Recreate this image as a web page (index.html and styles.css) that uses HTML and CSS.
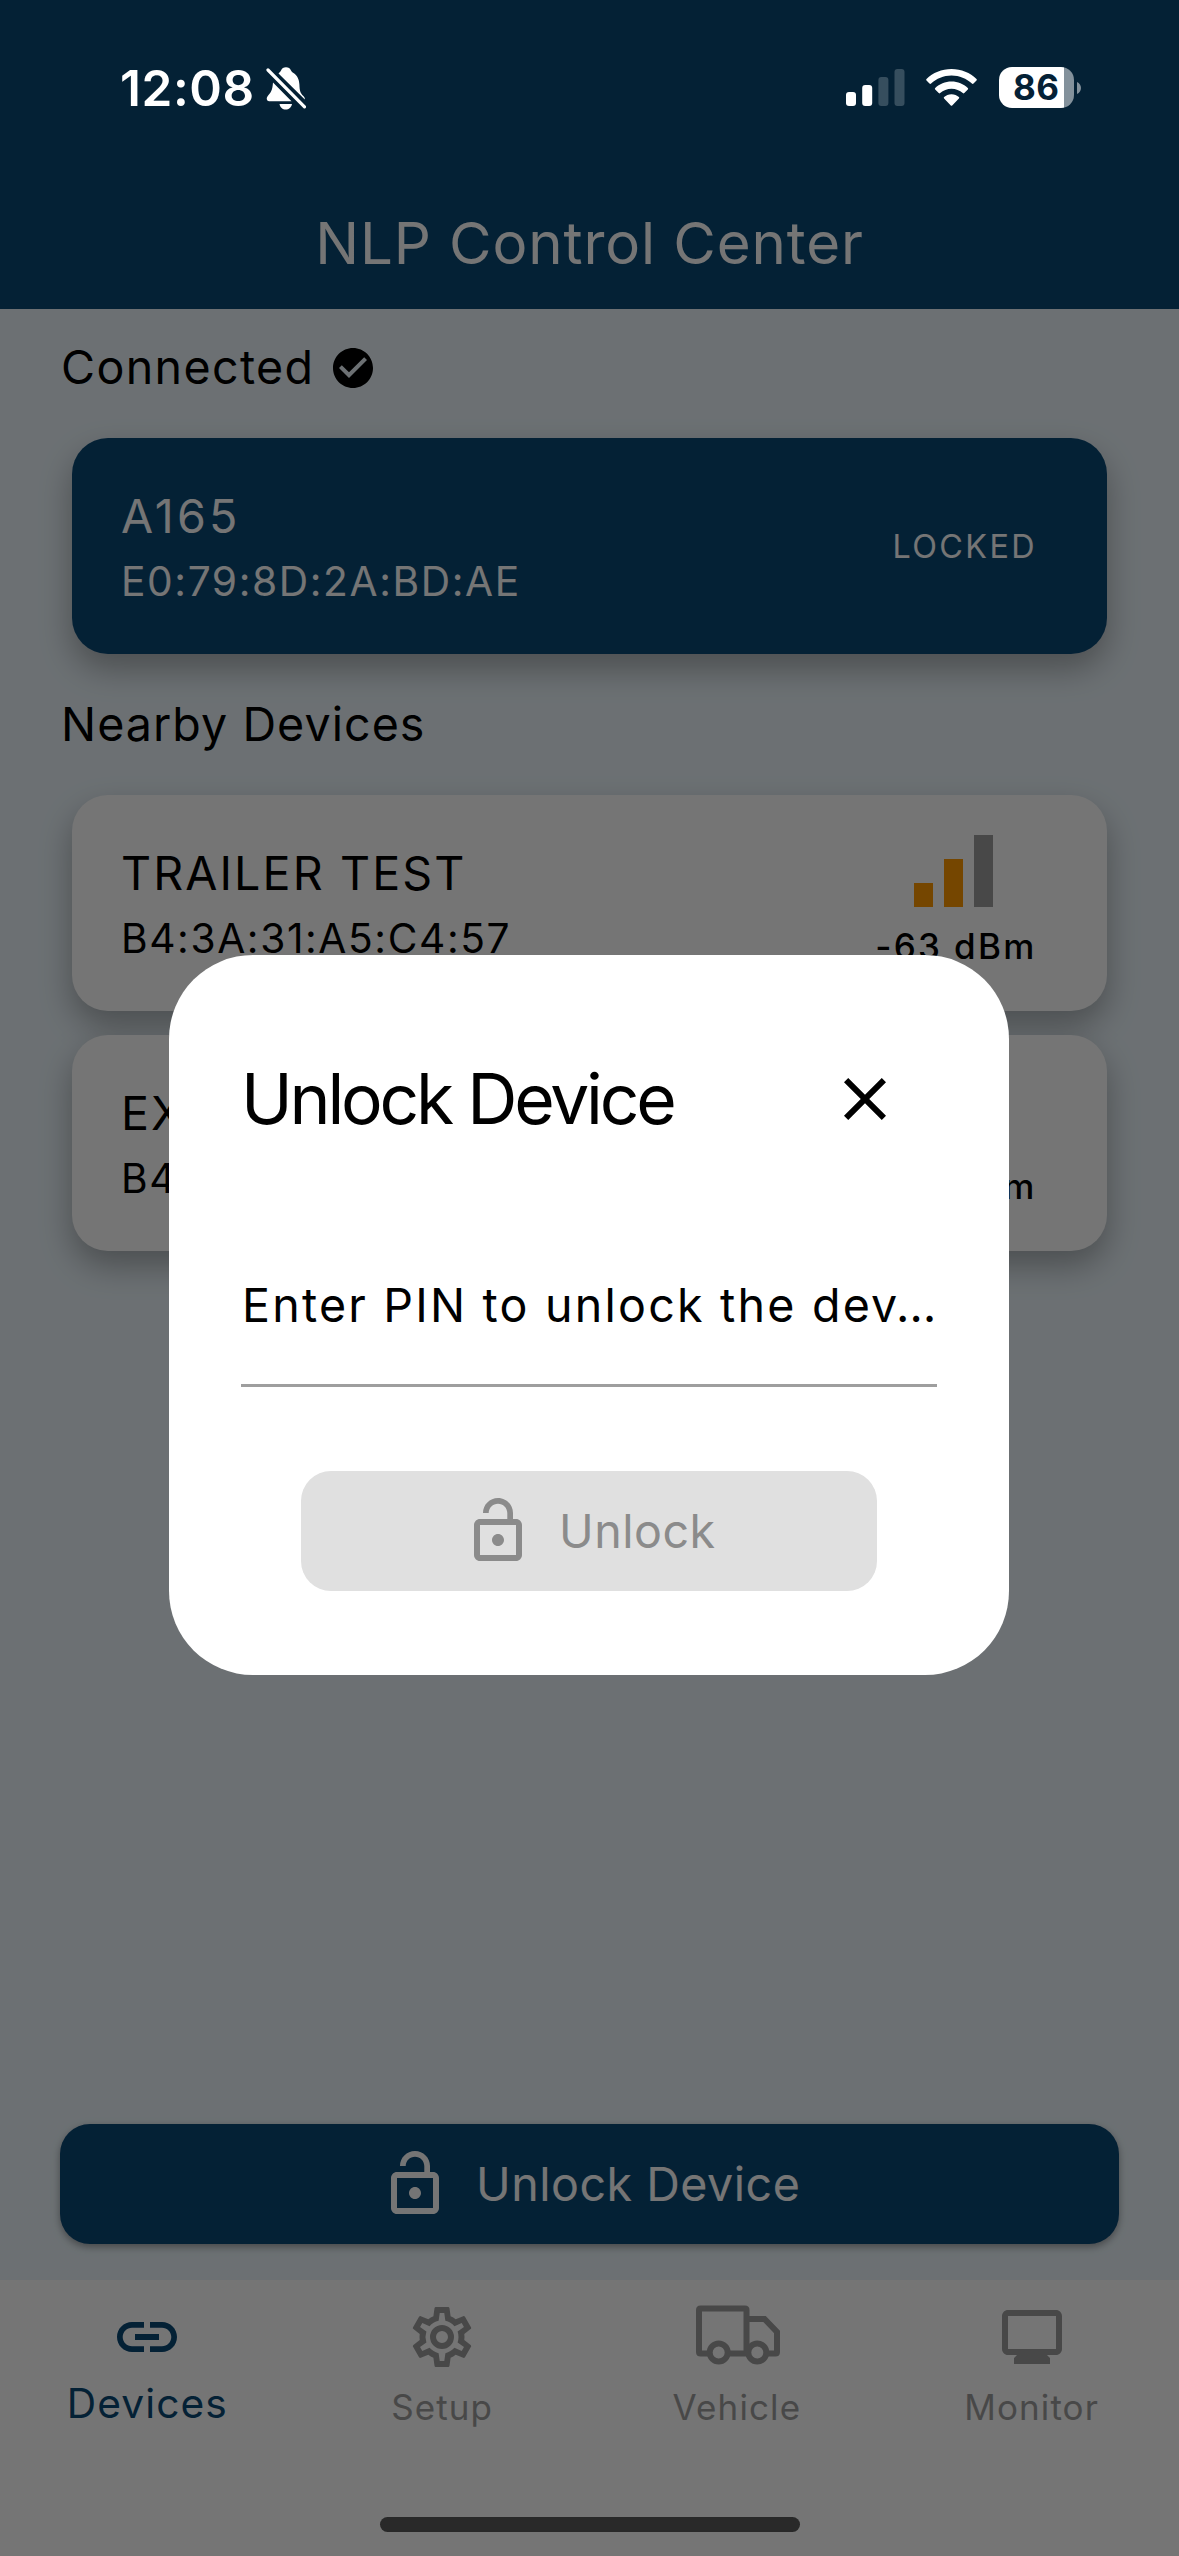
FILE: index.html
```html
<!DOCTYPE html>
<html lang="en">
<head>
<meta charset="utf-8">
<title>NLP Control Center</title>
<link rel="stylesheet" href="styles.css">
</head>
<body>
<div class="screen">
  <header class="app-bar"><h1 class="app-title">NLP Control Center</h1></header>

  <main class="content">
    <h2 class="section section-connected"><span class="connected-text">Connected</span>
      <svg class="check" viewBox="0 0 24 24"><path d="M12 2C6.48 2 2 6.48 2 12s4.48 10 10 10 10-4.48 10-10S17.52 2 12 2zm-2 15l-5-5 1.41-1.41L10 14.17l7.59-7.59L19 8l-9 9z"/></svg>
    </h2>
    <article class="card card-active">
      <div class="card-info"><div class="name name-code">A165</div><div class="mac">E0:79:8D:2A:BD:AE</div></div>
      <div class="locked">LOCKED</div>
    </article>
    <h2 class="section section-nearby">Nearby Devices</h2>
    <article class="card">
      <div class="card-info"><div class="name">TRAILER TEST</div><div class="mac">B4:3A:31:A5:C4:57</div></div>
      <div class="signal">
        <div class="bars"><i class="bar low on"></i><i class="bar mid on"></i><i class="bar high"></i></div>
        <div class="dbm">-63 dBm</div>
      </div>
    </article>
    <article class="card">
      <div class="card-info"><div class="name">EX</div><div class="mac">B4</div></div>
      <div class="signal">
        <div class="bars"></div>
        <div class="dbm">dBm</div>
      </div>
    </article>
  </main>

  <button class="unlock-main">
    <svg class="icon72" viewBox="0 0 24 24"><path d="M12 17c1.1 0 2-.9 2-2s-.9-2-2-2-2 .9-2 2 .9 2 2 2zm6-9h-1V6c0-2.76-2.24-5-5-5S7 3.24 7 6h1.9c0-1.71 1.39-3.1 3.1-3.1 1.71 0 3.1 1.39 3.1 3.1v2H6c-1.1 0-2 .9-2 2v10c0 1.1.9 2 2 2h12c1.1 0 2-.9 2-2V10c0-1.1-.9-2-2-2zm0 12H6V10h12v10z"/></svg>
    <span class="unlock-text">Unlock Device</span>
  </button>

  <nav class="tabs">
    <div class="tab tab-on">
      <svg class="icon72" viewBox="0 0 24 24"><path d="M3.9 12c0-1.71 1.39-3.1 3.1-3.1h4V7H7c-2.76 0-5 2.24-5 5s2.24 5 5 5h4v-1.9H7c-1.71 0-3.1-1.39-3.1-3.1zM8 13h8v-2H8v2zm9-6h-4v1.9h4c1.71 0 3.1 1.39 3.1 3.1s-1.39 3.1-3.1 3.1h-4V17h4c2.76 0 5-2.24 5-5s-2.24-5-5-5z"/></svg>
      <span class="tab-text">Devices</span>
    </div>
    <div class="tab">
      <svg class="icon72" viewBox="0 0 24 24"><path d="M12 8a4 4 0 0 1 4 4 4 4 0 0 1-4 4 4 4 0 0 1-4-4 4 4 0 0 1 4-4m0 2a2 2 0 0 0-2 2 2 2 0 0 0 2 2 2 2 0 0 0 2-2 2 2 0 0 0-2-2m-2 12c-.25 0-.46-.18-.5-.42l-.37-2.650c-.63-.25-1.170-.59-1.690-.99l-2.490 1.010c-.22.08-.49 0-.61-.22l-2-3.460a.493.493 0 0 1 .12-.64l2.110-1.660L4.500 12l.07-1-2.110-1.630a.493.493 0 0 1-.12-.64l2-3.460c.12-.22.39-.31.61-.22l2.490 1c.52-.39 1.060-.73 1.690-.98l.37-2.650c.04-.24.25-.42.5-.42h4c.25 0 .46.18.5.42l.37 2.650c.63.25 1.170.59 1.690.98l2.490-1c.22-.09.49 0 .61.22l2 3.460c.13.22.07.49-.12.64L19.430 11l.07 1-.07 1 2.110 1.630c.19.15.25.42.12.64l-2 3.460c-.12.22-.39.31-.61.22l-2.490-1c-.52.39-1.060.73-1.690.98l-.37 2.650c-.04.24-.25.42-.5.42zm1.250-18-.37 2.610c-1.200.25-2.260.89-3.030 1.780L5.440 7.350l-.75 1.300L6.800 10.200a5.550 5.550 0 0 0 0 3.600l-2.120 1.560.75 1.300 2.430-1.040c.77.88 1.820 1.520 3.010 1.760l.37 2.620h1.520l.37-2.610c1.190-.25 2.240-.89 3.010-1.770l2.430 1.040.75-1.300-2.120-1.550c.4-1.170.4-2.440 0-3.610l2.110-1.550-.75-1.300-2.410 1.040a5.420 5.420 0 0 0-3.030-1.770L12.750 4z"/></svg>
      <span class="tab-text">Setup</span>
    </div>
    <div class="tab">
      <svg class="truck" viewBox="0 0 90 72"><g fill="none" stroke="currentColor" stroke-width="6"><path d="M17 52.500H8.500Q7 52.500 7 51V9Q7 7.500 8.500 7.500H53Q54.500 7.500 54.500 9V52.500M36 52.500H57M54.500 18H72.500L85 31V51Q85 52.500 83.500 52.500H75"/><circle cx="26.700" cy="51.500" r="9"/><circle cx="65.300" cy="51.500" r="9"/></g></svg>
      <span class="tab-text">Vehicle</span>
    </div>
    <div class="tab">
      <svg class="icon72" viewBox="0 0 24 24"><path fill-rule="evenodd" d="M4 3h16c1.1 0 2 .9 2 2v11c0 1.1-.9 2-2 2h-3l1 1v2H6v-2l1-1H4c-1.1 0-2-.9-2-2V5c0-1.1.9-2 2-2zm0 2v11h16V5z"/></svg>
      <span class="tab-text">Monitor</span>
    </div>
  </nav>
</div>

<div class="scrim">
  <section class="dialog">
    <div class="dialog-head">
      <h2 class="dialog-title">Unlock Device</h2>
      <svg class="icon72" viewBox="0 0 24 24"><path d="M19 6.41L17.59 5 12 10.59 6.41 5 5 6.41 10.59 12 5 17.59 6.41 19 12 13.41 17.59 19 19 17.59 13.41 12z"/></svg>
    </div>
    <div class="field"><span>Enter PIN to unlock the dev…</span></div>
    <button class="unlock-dialog">
      <svg class="icon72" viewBox="0 0 24 24"><path d="M12 17c1.1 0 2-.9 2-2s-.9-2-2-2-2 .9-2 2 .9 2 2 2zm6-9h-1V6c0-2.76-2.24-5-5-5S7 3.24 7 6h1.9c0-1.71 1.39-3.1 3.1-3.1 1.71 0 3.1 1.39 3.1 3.1v2H6c-1.1 0-2 .9-2 2v10c0 1.1.9 2 2 2h12c1.1 0 2-.9 2-2V10c0-1.1-.9-2-2-2zm0 12H6V10h12v10z"/></svg>
      <span class="unlock-text">Unlock</span>
    </button>
  </section>
</div>

<div class="status-bar">
  <span class="time">12:08</span>
  <svg class="bell" viewBox="0 0 40 43"><g fill="#fff"><path d="M12.500 6.500C14 5 14.500 4.500 15 3.500 16 1.200 17.500.300 20 .300s4 .9 5 3.200c.6 1.300 1.400 1.800 2.500 2.500 4 2.700 5.700 6.500 5.900 11.500.2 6 .9 8.500 4 11.500 1.200 1.200 1.600 2.300 1.400 3.600z"/><path d="M7 15.500 25.500 34.300H3.200C.8 34.300-.1 31.200 1.600 29.200 5 25.500 6.500 23 7 15.500z"/><path d="M13.500 37H26c-.6 3.300-3.200 5.600-6.300 5.600S14 40.300 13.500 37z"/></g><path d="M2 3 38.500 39.800" stroke="#fff" stroke-width="3.200" stroke-linecap="round"/></svg>
  <svg class="cell" viewBox="0 0 59 37"><g fill="#fff"><rect x="0" y="23" width="10" height="14" rx="3"/><rect x="16.200" y="16" width="10" height="21" rx="3"/><g opacity=".2"><rect x="32.400" y="8" width="10" height="29" rx="3"/><rect x="48.500" y="0" width="10" height="37" rx="3"/></g></g></svg>
  <svg class="wifi" viewBox="0 0 51 37"><g fill="#fff"><path d="M25.500 0C35.300 0 44.200 3.800 50.500 10c.5.500.5 1.100 0 1.600l-3 3c-.5.500-1.100.5-1.600 0C40.500 9.500 33.400 6.500 25.500 6.500S10.500 9.500 5.100 14.600c-.5.500-1.100.5-1.600 0l-3-3c-.5-.5-.5-1.100 0-1.600C6.800 3.800 15.700 0 25.500 0z"/><path d="M25.500 12.500c6.300 0 12.100 2.500 16.300 6.400.5.500.5 1.100 0 1.600l-3.500 3.600c-.5.400-1 .4-1.500 0-3-2.700-7-4.400-11.300-4.400s-8.300 1.700-11.300 4.400c-.5.400-1 .4-1.500 0l-3.500-3.600c-.5-.5-.5-1.100 0-1.600 4.200-3.900 10-6.400 16.300-6.400z"/><path d="M25.500 25.200c2.900 0 5.500 1.100 7.400 2.800.5.500.5 1 0 1.500L26.200 36.500c-.5.400-.9.400-1.400 0L18.100 29.500c-.5-.5-.5-1 0-1.500 1.900-1.700 4.500-2.800 7.400-2.800z"/></g></svg>
  <div class="battery"><span class="level">86</span></div>
  <svg class="battery-cap" viewBox="0 0 4 12"><path d="M0 0c2.500 1.200 4 3.500 4 6s-1.500 4.800-4 6z" fill="#83919b"/></svg>
</div>
<div class="home-indicator"></div>
</body>
</html>
```
FILE: styles.css
```css
* { box-sizing: border-box; margin: 0; padding: 0; }
body { width: 1179px; height: 2556px; overflow: hidden; position: relative; font-family: Inter, "Liberation Sans", sans-serif; color: #000; }
svg { display: block; fill: currentColor; flex: none; }
button { border: 0; font: inherit; }
h1, h2 { font-weight: 400; }
span, .name, .mac, .dbm, .locked { white-space: nowrap; }
.icon72 { width: 72px; height: 72px; }

.screen { width: 1179px; height: 2556px; display: flex; flex-direction: column; background: #ebf5fb; }
.app-bar { height: 309px; background: #0a4875; color: #fff; display: flex; justify-content: center; padding-top: 207px; }
.app-title { font-size: 58.2px; line-height: 72px; letter-spacing: .9px; height: 72px; white-space: nowrap; }

.content { flex: 1; padding: 0 72px; display: flex; flex-direction: column; }
.section { display: flex; align-items: center; height: 60px; margin-left: -11px; font-size: 46.6px; line-height: 60px; }
.section-connected { margin-top: 29px; margin-bottom: 40px; gap: 15px; }
.connected-text { letter-spacing: 1.35px; padding-bottom: 2px; }
.section-nearby { margin-top: 40px; margin-bottom: 41px; letter-spacing: 1.05px; }
.check { width: 48px; height: 48px; }
.card { height: 216px; flex: none; border-radius: 36px; background: #fff; margin-bottom: 24px; padding: 0 72px 0 49px; display: flex; justify-content: space-between; align-items: center; box-shadow: 0 15px 33px rgba(0,0,0,.3); }
.card-active { background: #0a4875; color: #fff; margin-bottom: 0; }
.card-info { padding-top: 7px; }
.name { font-size: 46.6px; line-height: 65px; letter-spacing: 2.1px; }
.name-code { letter-spacing: 3.2px; }
.mac { font-size: 40.7px; line-height: 66px; letter-spacing: 1.6px; }
.locked { font-size: 32.3px; letter-spacing: 2.4px; margin-right: -2px; }
.signal { display: flex; flex-direction: column; align-items: flex-end; }
.bars { display: flex; align-items: flex-end; gap: 11.25px; height: 72px; margin-right: 42px; }
.bar { width: 18.75px; background: #9e9e9e; }
.low { height: 24px; }
.mid { height: 48px; }
.high { height: 72px; }
.on { background: #ff9800; }
.dbm { font-size: 35px; font-weight: 500; line-height: 46px; margin-top: 16px; padding-bottom: 2px; letter-spacing: 2.3px; margin-right: -1.6px; }

.unlock-main { width: 1059px; height: 120px; margin: 0 60px 36px; border-radius: 30px; background: #0a4875; color: #fff; display: flex; align-items: center; padding-left: 319px; gap: 25px; font-size: 46.6px; box-shadow: 0 3px 6px rgba(0,0,0,.25), 0 3px 12px rgba(0,0,0,.12); }
.unlock-text { letter-spacing: .5px; }
.tabs { height: 276px; background: #fff; color: #9e9e9e; display: grid; grid-template-columns: repeat(4, 1fr); }
.tab { display: flex; flex-direction: column; align-items: center; padding-top: 21px; }
.tab-text { font-size: 35px; line-height: 44px; margin-top: 12px; letter-spacing: 1.1px; }
.tab-on { color: #0a4875; }
.tab-on .tab-text { font-size: 40.7px; margin-top: 9px; }
.truck { width: 90px; height: 72px; }

.scrim { position: absolute; inset: 0; background: rgba(0,0,0,.541); }
.dialog { position: absolute; left: 169px; top: 955px; width: 840px; height: 720px; border-radius: 84px; background: #fff; padding: 72px; display: flex; flex-direction: column; }
.dialog-head { height: 144px; display: flex; align-items: center; justify-content: space-between; padding-right: 36px; }
.dialog-title { font-size: 69.5px; line-height: 96px; letter-spacing: -3.2px; white-space: nowrap; }
.field { height: 216px; border-bottom: 3px solid #9e9e9e; display: flex; align-items: center; padding: 54px 0 0 1px; font-size: 46.6px; letter-spacing: 2.2px; }
.unlock-dialog { width: 576px; height: 120px; margin: 84px auto 0; border-radius: 30px; background: #e0e0e0; color: #8b8b8b; display: flex; align-items: center; padding-left: 161px; gap: 25px; font-size: 46.6px; }
.unlock-dialog .unlock-text { padding-bottom: 1px; }

.status-bar { position: absolute; left: 0; top: 0; width: 1179px; height: 177px; color: #fff; display: flex; align-items: flex-start; padding: 67px 0 0 120px; }
.time { font-size: 49.5px; font-weight: 600; line-height: 42px; width: 146px; letter-spacing: .6px; }
.bell { width: 40px; height: 43px; }
.cell { width: 59px; height: 37px; margin: 2px 22px 0 540px; }
.wifi { width: 51px; height: 37px; margin: 2px 22px 0 -1px; }
.battery { width: 75px; height: 41px; border-radius: 13px; background: linear-gradient(90deg, #fff 65px, #83919b 65px); padding-left: 14px; }
.level { display: block; font-size: 35px; line-height: 41px; font-weight: 700; letter-spacing: .5px; color: #042136; }
.battery-cap { width: 4px; height: 12px; margin: 15px 0 0 3px; }
.home-indicator { position: absolute; left: 380px; top: 2517px; width: 420px; height: 15px; border-radius: 8px; background: #292929; }
```
